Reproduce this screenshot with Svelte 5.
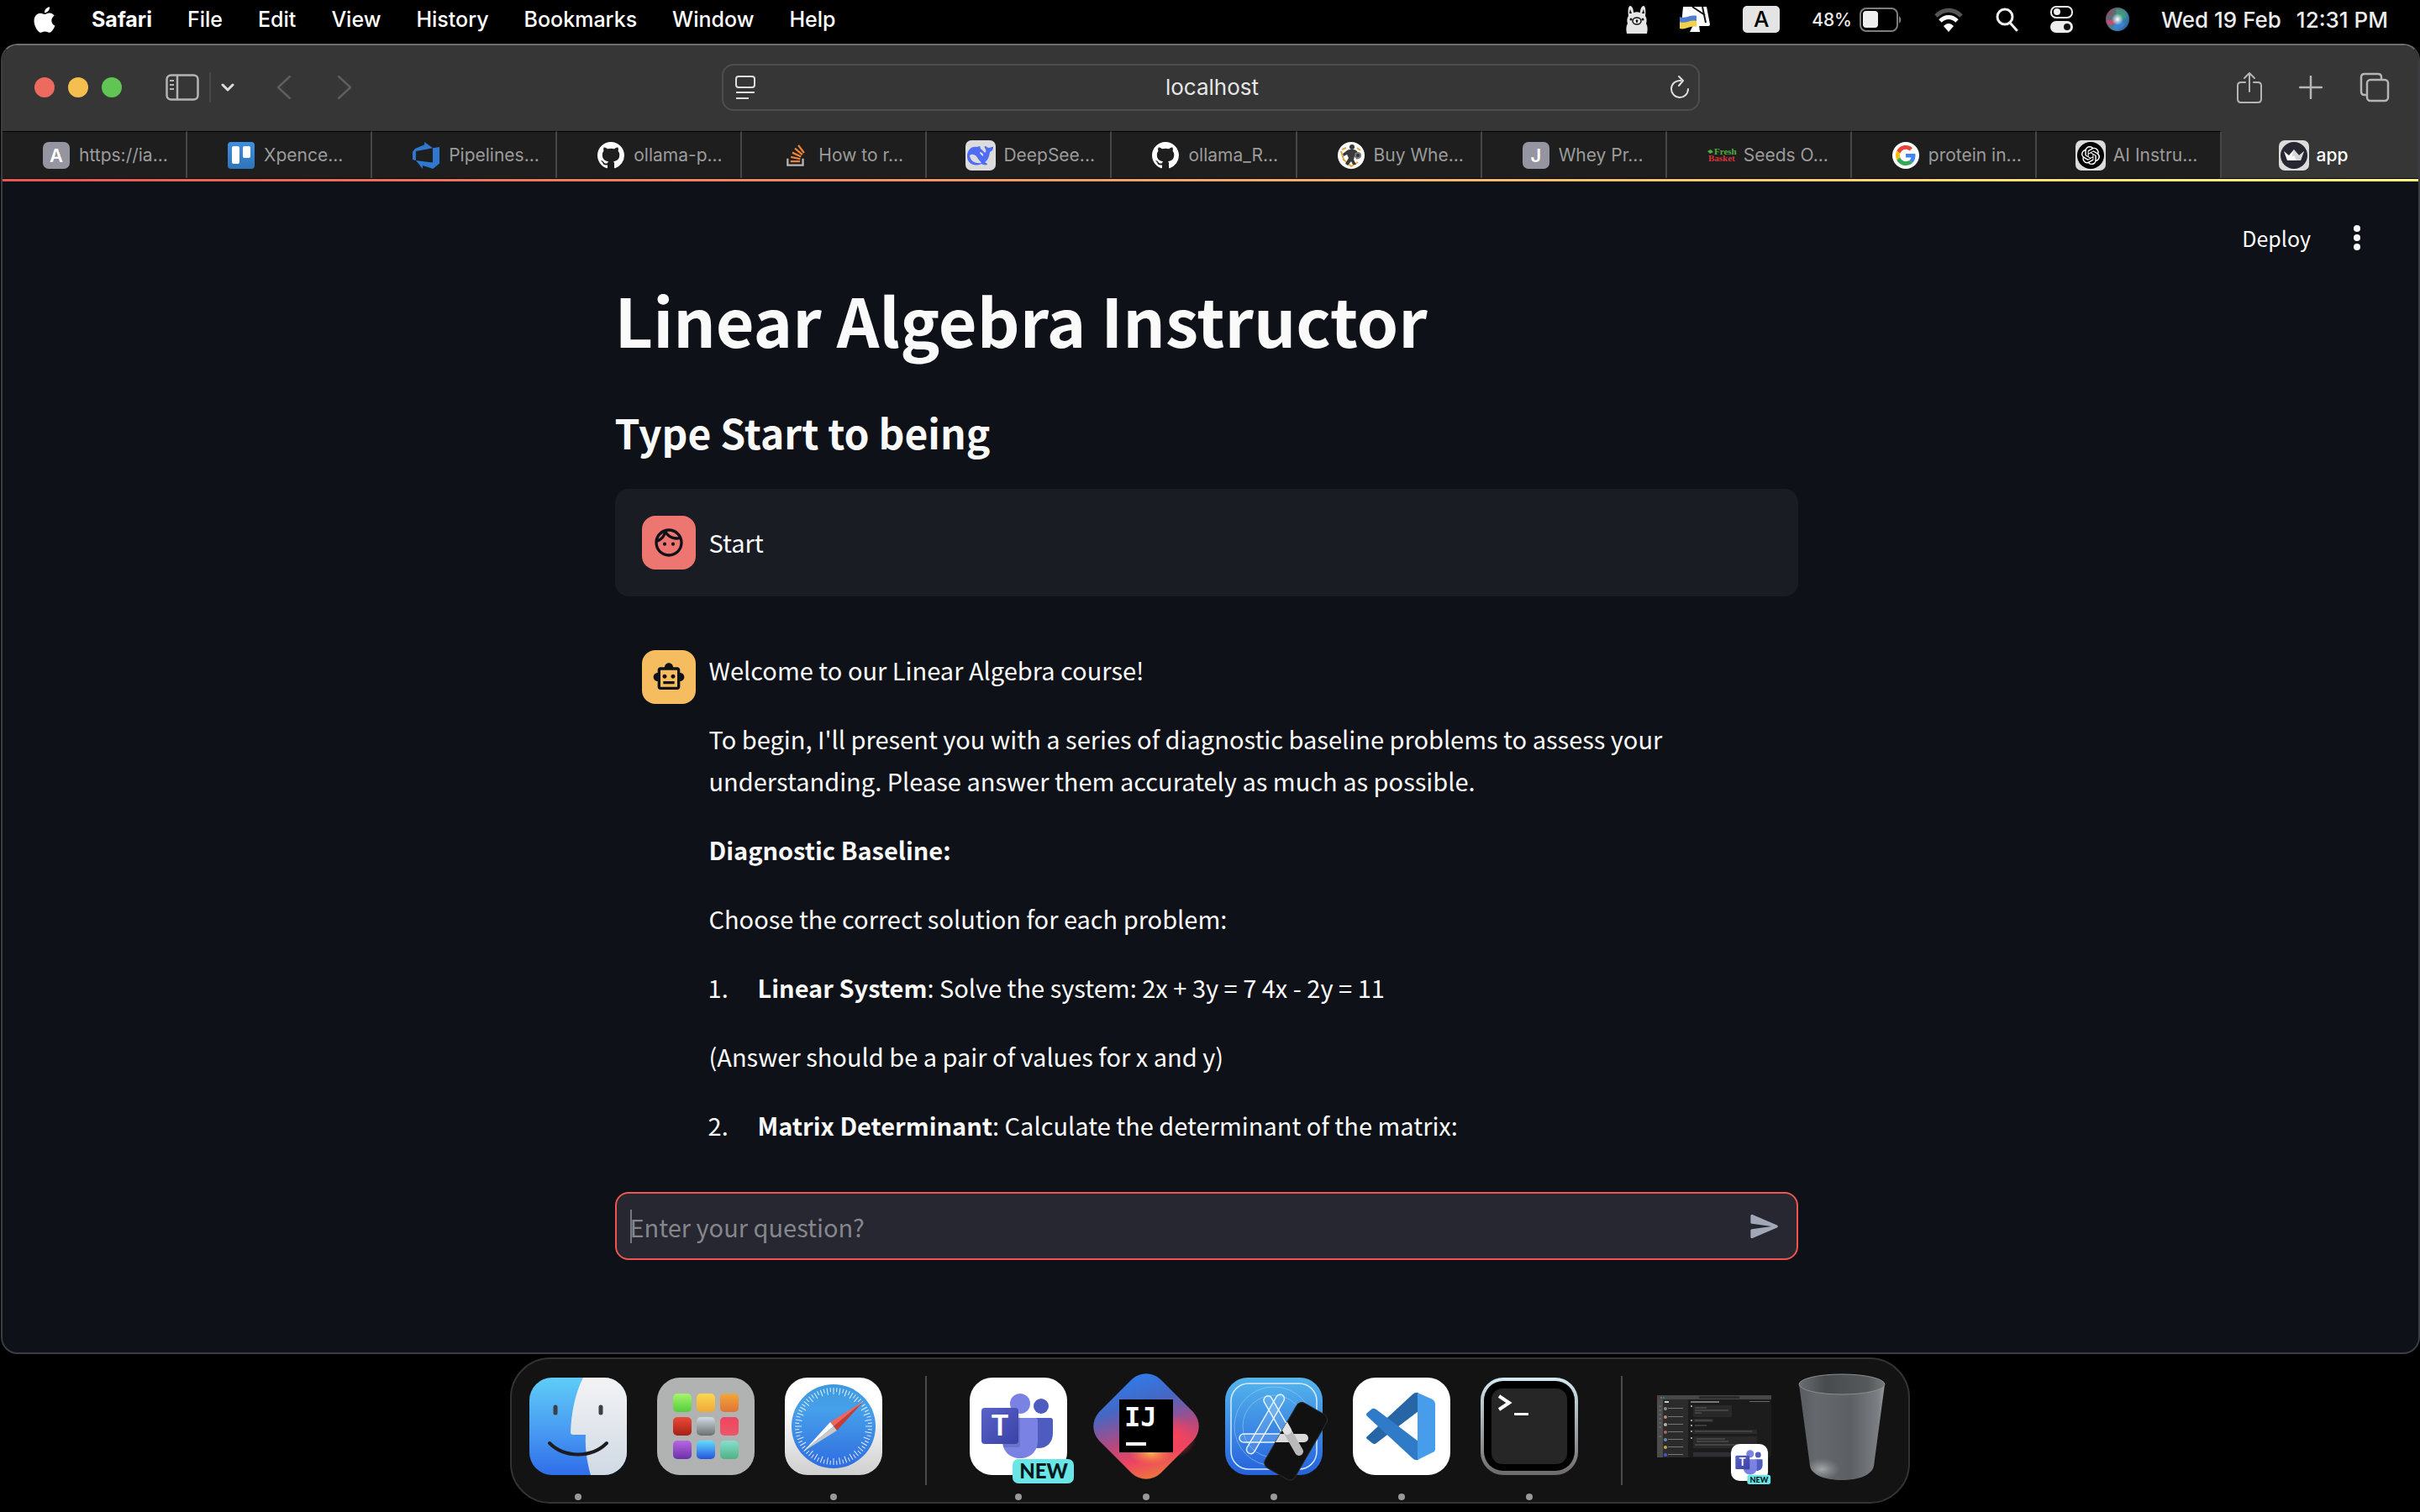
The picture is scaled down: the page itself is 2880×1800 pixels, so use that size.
<script>
  const menus = ['File', 'Edit', 'View', 'History', 'Bookmarks', 'Window', 'Help'];

  const tabs = [
    { icon: 'letter', letter: 'A', title: 'https://ia...' },
    { icon: 'trello', title: 'Xpence...' },
    { icon: 'azure', title: 'Pipelines...' },
    { icon: 'github', title: 'ollama-p...' },
    { icon: 'stack', title: 'How to r...' },
    { icon: 'deepseek', title: 'DeepSee...' },
    { icon: 'github', title: 'ollama_R...' },
    { icon: 'muscle', title: 'Buy Whe...' },
    { icon: 'letter', letter: 'J', title: 'Whey Pr...' },
    { icon: 'basket', title: 'Seeds O...' },
    { icon: 'google', title: 'protein in...' },
    { icon: 'openai', title: 'AI Instru...' },
    { icon: 'streamlit', title: 'app', active: true },
  ];

  const dock = [
    { name: 'Finder', icon: 'finder', open: true },
    { name: 'Launchpad', icon: 'launchpad' },
    { name: 'Safari', icon: 'safari', open: true },
    { separator: true },
    { name: 'Microsoft Teams', icon: 'teams', open: true },
    { name: 'IntelliJ IDEA', icon: 'intellij', open: true },
    { name: 'Simulator', icon: 'simulator', open: true },
    { name: 'Visual Studio Code', icon: 'vscode', open: true },
    { name: 'Terminal', icon: 'terminal', open: true },
    { separator: true },
    { name: 'Minimised Teams window', icon: 'thumbnail' },
    { name: 'Trash', icon: 'trash' },
  ];

  const ticks = Array.from({ length: 72 }, (_, i) => i);

  const pads = [
    ['#a5f56e', '#56cc3c'], ['#fbd74f', '#f0a93a'], ['#f2a63a', '#e07434'],
    ['#ea4a38', '#a82116'], ['#cfdde2', '#6c6f70'], ['#ec4660', '#ee5767'],
    ['#b867e4', '#6a31a8'], ['#62dcfd', '#2353dd'], ['#86dfcf', '#4fb184'],
  ];

  const chatRows = [
    { y: 31, c: '#8d8d8d' }, { y: 41, c: '#c08a7c' }, { y: 50, c: '#b9b4a8' },
    { y: 59, c: '#a66' }, { y: 68, c: '#6a86b8' }, { y: 77, c: '#c9a25a' }, { y: 86, c: '#4a55c0' },
  ];

  let question = $state('');
  let address = $state('localhost');
</script>

{#snippet favicon(tab)}
  {#if tab.icon === 'letter'}
    <svg viewBox="0 0 32 32" width="32" height="32" aria-hidden="true">
      <rect width="32" height="32" rx="7" fill="#9495a1" />
      <text x="16" y="24" text-anchor="middle" font-size="22" font-weight="600" fill="#fff">{tab.letter}</text>
    </svg>
  {:else if tab.icon === 'trello'}
    <svg viewBox="0 0 32 32" width="32" height="32" aria-hidden="true">
      <defs><linearGradient id="trello" x2="0" y2="1"><stop stop-color="#3e8fe0" /><stop offset="1" stop-color="#2f74b8" /></linearGradient></defs>
      <rect width="32" height="32" rx="4" fill="url(#trello)" />
      <rect x="5" y="5" width="9" height="21" rx="2" fill="#fff" /><rect x="18" y="5" width="9" height="14" rx="2" fill="#fff" />
    </svg>
  {:else if tab.icon === 'azure'}
    <svg viewBox="0 0 24 24" width="32" height="32" aria-hidden="true">
      <path fill="#2f78d0" d="M0 8.877L2.247 5.91l8.405-3.416V.022l7.37 5.393L2.966 8.338v8.225L0 15.707zm24-4.45v14.651l-5.753 4.9-9.303-3.057v3.056l-5.978-7.416 15.057 1.798V5.415z" />
    </svg>
  {:else if tab.icon === 'github'}
    <svg viewBox="0 0 16 16" width="32" height="32" aria-hidden="true">
      <path fill="#fff" d="M8 0C3.58 0 0 3.58 0 8c0 3.54 2.29 6.53 5.47 7.59.4.07.55-.17.55-.38 0-.19-.01-.82-.01-1.49-2.01.37-2.53-.49-2.69-.94-.09-.23-.48-.94-.82-1.13-.28-.15-.68-.52-.01-.53.63-.01 1.08.58 1.23.82.72 1.21 1.87.87 2.33.66.07-.52.28-.87.51-1.07-1.78-.2-3.64-.89-3.64-3.95 0-.87.31-1.59.82-2.15-.08-.2-.36-1.02.08-2.12 0 0 .67-.21 2.2.82.64-.18 1.32-.27 2-.27s1.36.09 2 .27c1.53-1.04 2.2-.82 2.2-.82.44 1.1.16 1.92.08 2.12.51.56.82 1.27.82 2.15 0 3.07-1.87 3.75-3.65 3.95.29.25.54.73.54 1.48 0 1.07-.01 1.93-.01 2.2 0 .21.15.46.55.38A8.01 8.01 0 0016 8c0-4.42-3.58-8-8-8z" />
    </svg>
  {:else if tab.icon === 'stack'}
    <svg viewBox="-3 -3 30 30" width="32" height="32" aria-hidden="true">
      <path fill="#ee8236" d="M15.725 0l-1.72 1.277 6.39 8.588 1.716-1.277L15.725 0zm-3.94 3.418l-1.369 1.644 8.225 6.85 1.369-1.644-8.225-6.85zm-3.15 4.465l-.905 1.94 9.702 4.517.904-1.94-9.701-4.517zm-1.85 4.86l-.44 2.093 10.473 2.201.44-2.092-10.473-2.203zm-.63 4.86v2.13h10.66v-2.13H6.154Z" />
      <path fill="#b4b8bd" d="M1.89 15.47V24h19.19v-8.53h-2.133v6.397H4.021v-6.396H1.89z" />
    </svg>
  {:else if tab.icon === 'deepseek'}
    <svg class="wide" viewBox="0 0 36 36" width="36" height="36" aria-hidden="true">
      <rect width="36" height="36" rx="7" fill="#dcdcdc" />
      <path fill="#4f6cf6" d="M2 19C2 12 7 7 13 8c2 0 2-1 4-1 1 0 0 2 1 3 2 2 4 3 5 5 1-1 2-2 1-4s-2-3-1-4c2 0 3 2 5 2s3-2 5-1c0 4-2 5-4 6-1 7-3 10-6 12 1 1 3 1 3 3-3 1-5 0-7-1C11 32 2 28 2 19z" />
      <path fill="#dcdcdc" d="M5 18c4-3 8 0 10 4 1 2 3 3 4 5-6 1-13-1-14-9zM17 14c3 0 5 3 4 5-2-1-4-3-4-5z" />
    </svg>
  {:else if tab.icon === 'muscle'}
    <svg viewBox="0 0 32 32" width="32" height="32" aria-hidden="true">
      <circle cx="16" cy="16" r="16" fill="#fff" />
      <path fill="none" stroke="#dfa63c" stroke-width="2" d="M5 9l5-2M4 11l3 10 9 8 8-5M27 10l-4-3" />
      <circle cx="17" cy="6" r="3" fill="#3a3a3a" />
      <path fill="#3a3a3a" d="M10 11c3-3 10-3 13 0l3 5-3 5-3-4-1 4 3 6h-4l-2-4-4 5-3-2 4-7-2-4-4 2-1-3z" />
      <circle cx="24" cy="16" r="4" fill="#777" /><circle cx="24" cy="16" r="2" fill="#333" />
    </svg>
  {:else if tab.icon === 'basket'}
    <svg class="spill" viewBox="0 0 32 32" width="32" height="32" aria-hidden="true">
      <text class="script" x="8" y="15" font-size="11" fill="#4caf3c">Fresh</text>
      <text class="script" x="1" y="23" font-size="11" fill="#d8323a">Basket</text>
      <path d="M0 11l4-2 3 3-4 2z" fill="#4caf3c" />
    </svg>
  {:else if tab.icon === 'google'}
    <svg viewBox="0 0 32 32" width="32" height="32" aria-hidden="true">
      <circle cx="16" cy="16" r="16" fill="#fff" />
      <g transform="translate(4 4) scale(.5)">
        <path fill="#ea4335" d="M24 9.5c3.54 0 6.71 1.22 9.21 3.6l6.85-6.85C35.9 2.38 30.47 0 24 0 14.62 0 6.51 5.38 2.56 13.22l7.98 6.19C12.43 13.72 17.74 9.5 24 9.5z" />
        <path fill="#4285f4" d="M46.98 24.55c0-1.57-.15-3.09-.38-4.55H24v9.02h12.94c-.58 2.96-2.26 5.48-4.78 7.18l7.73 6c4.51-4.18 7.09-10.36 7.09-17.65z" />
        <path fill="#fbbc05" d="M10.53 28.59c-.48-1.45-.76-2.99-.76-4.59s.27-3.14.76-4.59l-7.98-6.19C.92 16.46 0 20.12 0 24c0 3.88.92 7.54 2.56 10.78l7.97-6.19z" />
        <path fill="#34a853" d="M24 48c6.48 0 11.93-2.13 15.89-5.81l-7.73-6c-2.15 1.45-4.92 2.3-8.16 2.3-6.26 0-11.57-4.22-13.47-9.91l-7.98 6.19C6.51 42.62 14.62 48 24 48z" />
      </g>
    </svg>
  {:else if tab.icon === 'openai'}
    <svg class="wide" viewBox="0 0 36 36" width="36" height="36" aria-hidden="true">
      <rect width="36" height="36" rx="7" fill="#dcdcdc" />
      <circle cx="18" cy="18" r="16" fill="#000" />
      <g transform="translate(7 7) scale(.92)">
        <path fill="#fff" d="M22.2819 9.8211a5.9847 5.9847 0 0 0-.5157-4.9108 6.0462 6.0462 0 0 0-6.5098-2.9A6.0651 6.0651 0 0 0 4.9807 4.1818a5.9847 5.9847 0 0 0-3.9977 2.9 6.0462 6.0462 0 0 0 .7427 7.0966 5.98 5.98 0 0 0 .511 4.9107 6.051 6.051 0 0 0 6.5146 2.9001A5.9847 5.9847 0 0 0 13.2599 24a6.0557 6.0557 0 0 0 5.7718-4.2058 5.9894 5.9894 0 0 0 3.9977-2.9001 6.0557 6.0557 0 0 0-.7475-7.0729zm-9.022 12.6081a4.4755 4.4755 0 0 1-2.8764-1.0408l.1419-.0804 4.7783-2.7582a.7948.7948 0 0 0 .3927-.6813v-6.7369l2.02 1.1686a.071.071 0 0 1 .038.052v5.5826a4.504 4.504 0 0 1-4.4945 4.4944zm-9.6607-4.1254a4.4708 4.4708 0 0 1-.5346-3.0137l.142.0852 4.783 2.7582a.7712.7712 0 0 0 .7806 0l5.8428-3.3685v2.3324a.0804.0804 0 0 1-.0332.0615L9.74 19.9502a4.4992 4.4992 0 0 1-6.1408-1.6464zM2.3408 7.8956a4.485 4.485 0 0 1 2.3655-1.9728V11.6a.7664.7664 0 0 0 .3879.6765l5.8144 3.3543-2.0201 1.1685a.0757.0757 0 0 1-.071 0l-4.8303-2.7865A4.504 4.504 0 0 1 2.3408 7.872zm16.5963 3.8558L13.1038 8.364 15.1192 7.2a.0757.0757 0 0 1 .071 0l4.8303 2.7913a4.4944 4.4944 0 0 1-.6765 8.1042v-5.6772a.79.79 0 0 0-.407-.667zm2.0107-3.0231l-.142-.0852-4.7735-2.7818a.7759.7759 0 0 0-.7854 0L9.409 9.2297V6.8974a.0662.0662 0 0 1 .0284-.0615l4.8303-2.7866a4.4992 4.4992 0 0 1 6.6802 4.66zM8.3065 12.863l-2.02-1.1638a.0804.0804 0 0 1-.038-.0567V6.0742a4.4992 4.4992 0 0 1 7.3757-3.4537l-.142.0805L8.704 5.459a.7948.7948 0 0 0-.3927.6813zm1.0976-2.3654l2.602-1.4998 2.6069 1.4998v2.9994l-2.5974 1.4997-2.6067-1.4997Z" />
      </g>
    </svg>
  {:else}
    <svg class="wide" viewBox="0 0 36 36" width="36" height="36" aria-hidden="true">
      <rect width="36" height="36" rx="7" fill="#dcdcdc" />
      <circle cx="18" cy="18" r="16" fill="#262730" />
      <path fill="#fff" d="M6 13l6 5 6-7 6 7 6-5-4 11H10z" />
      <path fill="#b9bac0" d="M18 11l6 7 6-5-4 11H14z" opacity=".6" />
      <path fill="#fff" d="M10 24l8-6 3 6z" />
    </svg>
  {/if}
{/snippet}

{#snippet teams()}
  <rect width="116" height="116" rx="27" fill="#fff" />
  <circle cx="85" cy="34" r="9" fill="#4e5bbf" />
  <path d="M76 48h20q3 0 3 3v15c0 11-7 18-17 18-4 0-7-1-9-3z" fill="#4e5bbf" />
  <circle cx="60" cy="31" r="12" fill="#7a83e4" />
  <path d="M56 48h22q3 0 3 3v24c0 13-9 21-21 21S39 88 39 75V60z" fill="#7a83e4" />
  <path d="M42 44h18v36q0 3-3 3H40l-1-8z" fill="#000" opacity=".12" />
  <rect x="14" y="36" width="44" height="43" rx="4" fill="url(#teams-tile)" />
  <text class="sans" x="36" y="69" text-anchor="middle" font-size="34" font-weight="700" fill="#fff">T</text>
  <rect x="51" y="97" width="73" height="29" rx="7" fill="#6be6e6" />
  <text class="badge-text" x="88" y="120" text-anchor="middle" font-size="24" font-weight="700" fill="#06181b">NEW</text>
{/snippet}

{#snippet dockIcon(icon)}
  <svg class="dock-icon" viewBox="0 0 116 116" width="116" height="116" aria-hidden="true">
    {#if icon === 'finder'}
      <defs>
        <linearGradient id="finder-blue" x2="0" y2="1"><stop stop-color="#5fcdf8" /><stop offset=".5" stop-color="#4a9ff2" /><stop offset="1" stop-color="#2f6eea" /></linearGradient>
        <linearGradient id="finder-white" x2="0" y2="1"><stop stop-color="#f3f3f4" /><stop offset="1" stop-color="#d0d9e4" /></linearGradient>
        <clipPath id="finder-clip"><rect width="116" height="116" rx="27" /></clipPath>
      </defs>
      <g clip-path="url(#finder-clip)">
        <rect width="116" height="116" fill="url(#finder-blue)" />
        <path d="M64 0C54 20 50 42 49 65q0 3 3 3h15c-1 18 2 34 6 48h43V0z" fill="url(#finder-white)" />
      </g>
      <path d="M31 35v7M85 35v7" stroke="#3c3f44" stroke-width="5" stroke-linecap="round" />
      <path d="M24 78c18 18 50 18 68 0" fill="none" stroke="#1c1c1e" stroke-width="4" stroke-linecap="round" />
    {:else if icon === 'launchpad'}
      <rect width="116" height="116" rx="27" fill="#b1b2b2" />
      {#each pads as [from, to], i}
        <linearGradient id="pad-{i}" x2="0" y2="1"><stop stop-color={from} /><stop offset="1" stop-color={to} /></linearGradient>
        <rect x={19 + (i % 3) * 28} y={19 + Math.floor(i / 3) * 28} width="22" height="22" rx="5" fill="url(#pad-{i})" />
      {/each}
    {:else if icon === 'safari'}
      <defs>
        <linearGradient id="safari-tile" x2="0" y2="1"><stop offset=".3" stop-color="#fff" /><stop offset="1" stop-color="#cfcfcf" /></linearGradient>
        <linearGradient id="safari-dial" x2="0" y2="1"><stop stop-color="#3d9ade" /><stop offset=".3" stop-color="#46a0ea" /><stop offset="1" stop-color="#2f6ce0" /></linearGradient>
      </defs>
      <rect width="116" height="116" rx="27" fill="url(#safari-tile)" />
      <circle cx="58" cy="58" r="50" fill="url(#safari-dial)" />
      {#each ticks as i}
        <path d={i % 2 ? 'M58 12v5' : 'M58 12v8'} stroke="#fff" stroke-width="1" opacity=".85" transform="rotate({i * 5} 58 58)" />
      {/each}
      <path d="M94 28L54 53l4 5z" fill="#f0655c" /><path d="M94 28L62 63l-4-5z" fill="#c73c33" />
      <path d="M22 88l32-35 4 5z" fill="#fff" /><path d="M22 88l40-25-4-5z" fill="#c6c8ca" />
    {:else if icon === 'teams'}
      {@render teams()}
    {:else if icon === 'intellij'}
      <defs>
        <linearGradient id="ij-base" x1=".3" x2=".6" y2="1"><stop stop-color="#2f7df0" /><stop offset=".3" stop-color="#4468c4" /><stop offset=".6" stop-color="#b5487f" /><stop offset=".8" stop-color="#ee4560" /><stop offset="1" stop-color="#ee7a3c" /></linearGradient>
        <radialGradient id="ij-pink"><stop stop-color="#fa4357" /><stop offset="1" stop-color="#fa4357" stop-opacity="0" /></radialGradient>
        <radialGradient id="ij-gold"><stop stop-color="#f8b546" /><stop offset="1" stop-color="#f8803c" stop-opacity="0" /></radialGradient>
      </defs>
      <path d="M41 2c10-9 24-9 34 0l39 39c9 10 9 24 0 34l-39 39c-10 9-24 9-34 0L2 75c-9-10-9-24 0-34z" fill="url(#ij-base)" />
      <circle cx="92" cy="70" r="26" fill="url(#ij-pink)" />
      <ellipse cx="64" cy="90" rx="26" ry="14" fill="url(#ij-gold)" />
      <rect x="26" y="26" width="64" height="63" fill="#000" />
      <text class="mono" x="32" y="58" font-size="32" font-weight="700" fill="#fff">IJ</text>
      <rect x="34" y="77" width="24" height="4" fill="#fff" />
    {:else if icon === 'simulator'}
      <defs>
        <linearGradient id="sim-tile" x2="0" y2="1"><stop stop-color="#54b5ec" /><stop offset="1" stop-color="#2661dc" /></linearGradient>
        <clipPath id="sim-phone"><rect x="64" y="31" width="41" height="89" rx="7" transform="rotate(30 84 75)" /></clipPath>
      </defs>
      <rect width="116" height="116" rx="27" fill="url(#sim-tile)" />
      <rect x="7" y="7" width="102" height="102" rx="21" fill="none" stroke="#d4ecfb" stroke-width="1.5" />
      <g fill="none" stroke="#9fd2f5" opacity=".55"><circle cx="58" cy="58" r="47" /><circle cx="58" cy="58" r="37" /></g>
      <g fill="#ffffff" fill-opacity=".12" stroke="#e4f3fd" stroke-width="1.5">
        <rect x="53" y="20" width="10" height="80" rx="5" transform="rotate(-30 58 39)" />
        <rect x="53" y="18" width="10" height="80" rx="5" transform="rotate(30 58 38)" />
        <rect x="17" y="67" width="82" height="10" rx="5" />
      </g>
      <rect x="64" y="31" width="41" height="89" rx="7" transform="rotate(30 84 75)" fill="#111" stroke="#2c2c2c" />
      <g clip-path="url(#sim-phone)" stroke-linecap="round" stroke-width="10">
        <path d="M30 72h64" stroke="#dadada" />
        <path d="M52 25l36 63" stroke="#b9b9b9" />
        <path d="M66 49l8 14" stroke="#e2e2e2" />
      </g>
    {:else if icon === 'vscode'}
      <rect width="116" height="116" rx="27" fill="#fff" />
      <path d="M17 70L71 20q3-3 7-2v22L28 78q-2 2-5 0l-6-5q-2-1 0-3z" fill="#2766a6" />
      <path d="M17 46q-2-2 0-4l6-5q2-1 5 1l50 38v22q-4 1-7-2z" fill="#307bc8" />
      <path d="M77 18l18 8q3 2 3 5v54q0 3-3 4l-18 9z" fill="#479deb" />
    {:else if icon === 'terminal'}
      <defs><linearGradient id="term-rim" x2="0" y2="1"><stop stop-color="#d3e8f1" /><stop offset="1" stop-color="#6e6a6a" /></linearGradient></defs>
      <rect width="116" height="116" rx="27" fill="url(#term-rim)" />
      <rect x="4" y="4" width="108" height="107" rx="23" fill="#000" />
      <rect x="13" y="13" width="90" height="90" rx="13" fill="#262626" />
      <path d="M22 22l12 8-12 8" fill="none" stroke="#fff" stroke-width="4" />
      <rect x="40" y="42" width="17" height="3" fill="#fff" />
    {:else if icon === 'thumbnail'}
      <g transform="translate(-10 21)">
        <rect width="136" height="74" rx="2" fill="#1c1c1c" />
        <rect width="136" height="5" fill="#474747" /><rect x="50" y="1" width="48" height="3" fill="#2b2b2b" />
        <circle cx="2" cy="3" r="1" fill="#d05" /><circle cx="5" cy="3" r="1" fill="#4a4" /><circle cx="8" cy="3" r="1" fill="#46f" />
        <rect y="5" width="7" height="69" fill="#4c4c4c" /><rect x="7" y="5" width="30" height="69" fill="#2b2b2b" />
        <path d="M2 13h3M2 18h3M2 23h3M2 28h3M2 33h3M2 38h3M2 49h3" stroke="#77777f" />
        <rect x="9" y="7" width="5" height="2" fill="#ccc" />
        <rect x="40" y="7" width="34" height="2" fill="#777" /><rect x="110" y="7" width="24" height="1" fill="#666" />
        {#each chatRows as row}
          <circle cx="10" cy={row.y - 15} r="2" fill={row.c} />
          <rect x="13" y={row.y - 16} width="18" height="1" fill="#777" />
        {/each}
        <rect x="43" y="12" width="46" height="14" fill="#292929" /><path d="M45 15h14M45 18h40M45 21h8" stroke="#5e5e5e" />
        <rect x="43" y="28" width="24" height="4" fill="#2c2c2c" /><rect x="43" y="41" width="76" height="5" fill="#2a2a2a" /><path d="M45 43h68M45 36h14M45 30h20" stroke="#5a5a5a" />
        <rect x="43" y="49" width="76" height="14" fill="#292929" /><path d="M47 52h34M47 55h38M45 59h50" stroke="#5e5e5e" />
        <rect x="43" y="68" width="50" height="3" fill="#2f2f2f" /><path d="M43 72h50" stroke="#3d3d62" />
        <g fill="#c9c9b9"><circle cx="41" cy="13" r="1" /><circle cx="41" cy="30" r="1" /><circle cx="41" cy="36" r="1" /><circle cx="41" cy="43" r="1" /><circle cx="41" cy="51" r="1" /></g>
      </g>
      <g transform="translate(78 79) scale(.38)">{@render teams()}</g>
    {:else if icon === 'trash'}
      <defs>
        <linearGradient id="bin" x2="1" y2="0"><stop stop-color="#595d61" /><stop offset=".2" stop-color="#65696d" /><stop offset=".6" stop-color="#5c6064" /><stop offset=".92" stop-color="#7b7f83" /><stop offset="1" stop-color="#95999c" /></linearGradient>
        <linearGradient id="bin-in" x2="1" y2="0"><stop stop-color="#6a6e70" /><stop offset=".3" stop-color="#474b4e" /><stop offset=".8" stop-color="#55595c" /><stop offset="1" stop-color="#777" /></linearGradient>
        <radialGradient id="bin-glow"><stop stop-color="#a5a8aa" /><stop offset="1" stop-color="#8a8d90" stop-opacity="0" /></radialGradient>
        <clipPath id="bin-clip"><path d="M7 8l13 97c2 11 18 17 38 17s36-6 38-17L109 8z" /></clipPath>
      </defs>
      <path d="M7 8l13 97c2 11 18 17 38 17s36-6 38-17L109 8z" fill="url(#bin)" />
      <ellipse cx="34" cy="109" rx="22" ry="13" fill="url(#bin-glow)" clip-path="url(#bin-clip)" />
      <ellipse cx="58" cy="8" rx="51" ry="12" fill="url(#bin-in)" stroke="#8b8f92" />
    {/if}
  </svg>
{/snippet}

<svg class="defs" width="0" height="0" aria-hidden="true">
  <defs><linearGradient id="teams-tile" x2="1" y2="1"><stop stop-color="#5b63c8" /><stop offset="1" stop-color="#3a41a6" /></linearGradient></defs>
</svg>

<div class="desktop">
  <header class="menubar">
    <nav class="menus" aria-label="Menu bar">
      <button class="apple" aria-label="Apple menu">
        <svg viewBox="1 0 22 24" width="28" height="31" aria-hidden="true"><path fill="#fff" d="M12.152 6.896c-.948 0-2.415-1.078-3.96-1.04-2.04.027-3.91 1.183-4.961 3.014-2.117 3.675-.546 9.103 1.519 12.09 1.013 1.454 2.208 3.09 3.792 3.039 1.52-.065 2.09-.987 3.935-.987 1.831 0 2.35.987 3.96.948 1.637-.026 2.676-1.48 3.676-2.948 1.156-1.688 1.636-3.325 1.662-3.415-.039-.013-3.182-1.221-3.22-4.857-.026-3.04 2.48-4.494 2.597-4.559-1.429-2.09-3.623-2.324-4.39-2.376-2-.156-3.675 1.09-4.61 1.09zM15.53 3.83c.843-1.012 1.4-2.427 1.245-3.83-1.207.052-2.662.805-3.532 1.818-.78.896-1.454 2.338-1.273 3.714 1.338.104 2.715-.688 3.559-1.701" /></svg>
      </button>
      <button class="app-name">Safari</button>
      {#each menus as menu}
        <button>{menu}</button>
      {/each}
    </nav>
    <div class="status">
      <button aria-label="Ollama">
        <svg viewBox="0 0 26 34" width="26" height="34" aria-hidden="true">
          <path fill="#e6e6e6" d="M3 13C2 6 3 1 5 1s4 3 4 8c3-1 5-1 8 0 0-5 2-8 4-8s3 5 2 12c2 3 2 6 1 9 2 3 2 8 1 12H1c-1-4-1-9 1-12-1-3-1-6 1-9z" />
          <path fill="#111" d="M5 5l2 5H4zM21 5l-2 5h3z" />
          <circle cx="6" cy="17" r="1.5" fill="#111" /><circle cx="20" cy="17" r="1.5" fill="#111" />
          <ellipse cx="13" cy="19" rx="5" ry="4" fill="none" stroke="#111" stroke-width="1.5" /><path d="M12 18h2l-1 3z" stroke="#111" />
        </svg>
      </button>
      <button aria-label="Display">
        <svg viewBox="0 0 37 32" width="37" height="32" aria-hidden="true">
          <path fill="#fff" d="M4 1h28l4 21q0 2-2 2H4q-2 0-2-2zM16 23h7l1 8H12z" /><path d="M15 1l15 10M27 1l4 19" stroke="#111" stroke-width="2" fill="none" />
          <path fill="#4f7dd0" d="M0 13c7 3 12-3 20-1v7c-8-2-13 4-20 1z" /><path fill="#f2d04c" d="M0 19c7 3 12-3 20-1v7c-8-2-13 4-20 2z" />
        </svg>
      </button>
      <button class="keyboard" aria-label="Input source">A</button>
      <button class="battery">
        <span>48%</span>
        <svg viewBox="0 0 50 29" width="50" height="29" aria-hidden="true"><rect x="1" y="1" width="44" height="27" rx="7" fill="none" stroke="#7d7d7d" stroke-width="2" /><rect x="4" y="4" width="18" height="20" rx="4" fill="#eee" /><path d="M47 10c3 2 3 7 0 9z" fill="#7d7d7d" /></svg>
      </button>
      <button aria-label="Wi-Fi">
        <svg viewBox="0 0 36 30" width="36" height="30" aria-hidden="true"><g fill="none" stroke-width="5"><path d="M3 11c9-9 21-9 30 0" stroke="#555" /><path d="M8 17c6-6 14-6 20 0" stroke="#fff" /></g><path fill="#fff" d="M12 23c4-4 8-4 12 0l-6 7z" /></svg>
      </button>
      <button aria-label="Spotlight">
        <svg viewBox="0 0 27 32" width="27" height="32" aria-hidden="true"><g fill="none" stroke="#eee" stroke-width="3" stroke-linecap="round"><circle cx="11" cy="13" r="9" /><path d="M17 20l8 9" /></g></svg>
      </button>
      <button aria-label="Control Centre">
        <svg viewBox="0 0 28 34" width="28" height="34" aria-hidden="true"><rect x="1" y="2" width="25" height="13" rx="6" fill="none" stroke="#eee" stroke-width="2" /><circle cx="8" cy="8" r="4" fill="#eee" /><rect y="19" width="27" height="14" rx="7" fill="#eee" /><circle cx="20" cy="26" r="4" fill="#111" /></svg>
      </button>
      <button aria-label="Siri">
        <svg viewBox="0 0 28 28" width="28" height="28" aria-hidden="true">
          <defs>
            <linearGradient id="siri" x2="1" y2=".7"><stop stop-color="#a33a5e" /><stop offset=".4" stop-color="#5a6f7a" /><stop offset=".7" stop-color="#3b8aa0" /><stop offset="1" stop-color="#2f63a8" /></linearGradient>
            <radialGradient id="siri-core"><stop stop-color="#fff" /><stop offset="1" stop-color="#fff" stop-opacity="0" /></radialGradient>
          </defs>
          <circle cx="14" cy="14" r="14" fill="url(#siri)" /><path d="M1 15c0 6 6 9 12 1z" fill="#e0436e" opacity=".8" /><path d="M12 2c7-1 12 5 12 10l-11 1z" fill="#3fa07a" opacity=".8" /><path d="M8 24c4 3 12 2 15-5l-9-4z" fill="#3f7fe0" opacity=".8" /><circle cx="14" cy="14" r="7" fill="url(#siri-core)" />
        </svg>
      </button>
      <button class="clock"><span>Wed 19 Feb</span><span>12:31 PM</span></button>
    </div>
  </header>

  <section class="window" aria-label="Safari">
    <div class="toolbar">
      <div class="tools">
        <div class="lights">
          <button class="light close" aria-label="Close"></button>
          <button class="light minimise" aria-label="Minimise"></button>
          <button class="light zoom" aria-label="Zoom"></button>
        </div>
        <button aria-label="Sidebar">
          <svg viewBox="0 0 40 32" width="40" height="32" aria-hidden="true"><g fill="none" stroke="#b5b5b5" stroke-width="2.5"><rect x="1.5" y="1.5" width="37" height="29" rx="5" /><path d="M14 2v28" /><path d="M5 8h5M5 13h5M5 18h5" stroke-width="2" /></g></svg>
        </button>
        <span class="rule"></span>
        <button class="chevron" aria-label="Tab groups">
          <svg viewBox="0 0 16 10" width="16" height="10" aria-hidden="true"><path d="M2 2l6 6 6-6" fill="none" stroke="#dcdcdc" stroke-width="3" stroke-linecap="round" stroke-linejoin="round" /></svg>
        </button>
        <div class="history">
          <button aria-label="Back"><svg viewBox="0 0 18 30" width="18" height="30" aria-hidden="true"><path d="M16 2L2 15l14 13" fill="none" stroke="#5e5e5e" stroke-width="2.5" stroke-linecap="round" stroke-linejoin="round" /></svg></button>
          <button aria-label="Forward"><svg viewBox="0 0 18 30" width="18" height="30" aria-hidden="true"><path d="M2 2l14 13L2 28" fill="none" stroke="#5e5e5e" stroke-width="2.5" stroke-linecap="round" stroke-linejoin="round" /></svg></button>
        </div>
      </div>
      <div class="address">
        <button aria-label="Page settings">
          <svg viewBox="0 0 24 28" width="24" height="28" aria-hidden="true"><g fill="none" stroke="#dedede" stroke-width="2"><rect x="1" y="1" width="22" height="13" rx="3" /><path d="M1 20h22M1 27h15" /></g></svg>
        </button>
        <input aria-label="Address" bind:value={address} />
        <button aria-label="Reload">
          <svg viewBox="0 0 24 28" width="24" height="28" aria-hidden="true"><path d="M13 6a10 10 0 1 0 9 10M11 1l5 5-5 6" fill="none" stroke="#dedede" stroke-width="2" stroke-linecap="round" stroke-linejoin="round" /></svg>
        </button>
      </div>
      <div class="actions">
        <button aria-label="Share">
          <svg viewBox="0 0 30 38" width="30" height="38" aria-hidden="true"><path d="M10 13H5q-4 0-4 4v16q0 4 4 4h20q4 0 4-4V17q0-4-4-4h-5M15 24V2M9 8l6-6 6 6" fill="none" stroke="#b5b5b5" stroke-width="2" stroke-linecap="round" stroke-linejoin="round" /></svg>
        </button>
        <button aria-label="New tab">
          <svg viewBox="0 0 28 28" width="28" height="28" aria-hidden="true"><path d="M14 1v26M1 14h26" stroke="#b5b5b5" stroke-width="2.5" stroke-linecap="round" /></svg>
        </button>
        <button aria-label="Tab overview">
          <svg viewBox="0 0 36 36" width="36" height="36" aria-hidden="true"><g fill="none" stroke="#b5b5b5" stroke-width="2.5"><path d="M9 27H6q-4 0-4-4V6q0-4 4-4h16q4 0 4 4v3" /><rect x="9" y="9" width="25" height="25" rx="4" /></g></svg>
        </button>
      </div>
    </div>

    <nav class="tabs" aria-label="Tabs">
      {#each tabs as tab}
        <a class="tab" class:active={tab.active} href="#app">
          {@render favicon(tab)}
          <span>{tab.title}</span>
        </a>
      {/each}
    </nav>

    <main class="page">
      <div class="app-bar">
        <button class="deploy">Deploy</button>
        <button aria-label="Main menu">
          <svg viewBox="0 0 8 32" width="8" height="32" aria-hidden="true"><g fill="#fafafa"><circle cx="4" cy="5" r="4" /><circle cx="4" cy="16" r="4" /><circle cx="4" cy="27" r="4" /></g></svg>
        </button>
      </div>

      <div class="scroller">
        <div class="column">
          <h1>Linear Algebra Instructor</h1>
          <h2>Type Start to being</h2>

          <article class="message user">
            <span class="avatar">
              <svg viewBox="0 0 24 24" width="40" height="40" aria-hidden="true"><path fill="#0e1117" d="M10.25 13a1.25 1.25 0 11-2.5 0 1.25 1.25 0 012.5 0zM15 11.75a1.25 1.25 0 100 2.5 1.25 1.25 0 000-2.5zm7 .25c0 5.52-4.48 10-10 10S2 17.52 2 12 6.48 2 12 2s10 4.48 10 10zM10.66 4.12C12.06 6.44 14.6 8 17.5 8c.46 0 .91-.05 1.34-.12C17.44 5.56 14.9 4 12 4c-.46 0-.91.05-1.34.12zM4.42 9.47a8.046 8.046 0 003.66-4.44 8.046 8.046 0 00-3.66 4.44zM20 12c0-.78-.12-1.53-.33-2.24-.7.15-1.42.24-2.17.24a10 10 0 01-7.76-3.69A10.016 10.016 0 014 11.86c.01.04 0 .09 0 .14 0 4.41 3.59 8 8 8s8-3.59 8-8z" /></svg>
            </span>
            <div class="body"><p>Start</p></div>
          </article>

          <article class="message assistant">
            <span class="avatar">
              <svg viewBox="0 0 24 24" width="40" height="40" aria-hidden="true"><path fill="#0e1117" d="M20 9V7c0-1.1-.9-2-2-2h-3c0-1.66-1.34-3-3-3S9 3.34 9 5H6c-1.1 0-2 .9-2 2v2c-1.66 0-3 1.34-3 3s1.34 3 3 3v4c0 1.1.9 2 2 2h12c1.1 0 2-.9 2-2v-4c1.66 0 3-1.34 3-3s-1.34-3-3-3zm-2 10H6V7h12v12zm-9-6c-.83 0-1.5-.67-1.5-1.5S8.17 10 9 10s1.5.67 1.5 1.5S9.83 13 9 13zm7.5-1.5c0 .83-.67 1.5-1.5 1.5s-1.5-.67-1.5-1.5.67-1.5 1.5-1.5 1.5.67 1.5 1.5zM8 15h8v2H8v-2z" /></svg>
            </span>
            <div class="body">
              <p>Welcome to our Linear Algebra course!</p>
              <p>To begin, I'll present you with a series of diagnostic baseline problems to assess your understanding. Please answer them accurately as much as possible.</p>
              <p><strong>Diagnostic Baseline:</strong></p>
              <p>Choose the correct solution for each problem:</p>
              <ol><li><strong>Linear System</strong>: Solve the system: 2x + 3y = 7 4x - 2y = 11</li></ol>
              <p>(Answer should be a pair of values for x and y)</p>
              <ol start="2"><li><strong>Matrix Determinant</strong>: Calculate the determinant of the matrix:</li></ol>
            </div>
          </article>
        </div>
      </div>

      <div class="composer">
        <form class="ask" onsubmit={(e) => e.preventDefault()}>
          <span class="caret"></span>
          <input placeholder="Enter your question?" aria-label="Enter your question?" bind:value={question} />
          <button aria-label="Send">
            <svg viewBox="0 0 24 24" width="40" height="40" aria-hidden="true"><path fill="#a3a8b8" d="M3.4 20.4l17.45-7.48a1 1 0 000-1.84L3.4 3.6a.993.993 0 00-1.39.91L2 9.12c0 .5.37.93.87.99L17 12 2.87 13.88c-.5.07-.87.5-.87 1l.01 4.61c0 .71.73 1.2 1.39.91z" /></svg>
          </button>
        </form>
      </div>
    </main>
  </section>

  <nav class="dock" aria-label="Dock">
    {#each dock as item}
      {#if item.separator}
        <span class="divider"></span>
      {:else}
        <button class="dock-item" class:open={item.open} aria-label={item.name}>
          {@render dockIcon(item.icon)}
          <span class="running"></span>
        </button>
      {/if}
    {/each}
  </nav>
</div>

<style>
  :global(body) {
    margin: 0;
    background: #000;
  }

  * {
    box-sizing: border-box;
  }

  button,
  input {
    padding: 0;
    border: 0;
    background: none;
    color: inherit;
    font: inherit;
  }

  svg {
    display: block;
    flex: none;
  }

  .defs {
    position: absolute;
  }

  .desktop {
    display: flex;
    flex-direction: column;
    height: 100vh;
    padding-bottom: 10px;
    background: #000;
    color: #fff;
    font-family: Inter, 'Liberation Sans', sans-serif;
    font-size: 26px;
  }

  .menubar {
    display: flex;
    justify-content: space-between;
    flex: none;
    height: 52px;
    padding: 0 38px 6px 39px;
    font-weight: 500;
  }

  .menus,
  .status {
    display: flex;
    align-items: center;
  }

  .menus {
    gap: 42px;
    font-size: 25px;
  }

  .app-name {
    font-weight: 700;
  }

  .status {
    gap: 38px;
    color: #ececec;
  }

  .keyboard {
    width: 44px;
    height: 32px;
    border-radius: 5px;
    background: #e4e4e4;
    color: #000;
    line-height: 32px;
  }

  .battery {
    display: flex;
    align-items: center;
    gap: 9px;
    font-size: 21px;
  }

  .clock {
    display: flex;
    gap: 18px;
  }

  .window {
    display: flex;
    flex-direction: column;
    flex: 1;
    min-height: 0;
    margin: 0 0 4px 1px;
    border: 2px solid #3a3d42;
    border-top-color: #6e6e6e;
    border-radius: 20px;
    overflow: hidden;
    background: #0e1117;
  }

  .toolbar {
    display: grid;
    grid-template-columns: minmax(0, 1fr) minmax(0, 1164px) minmax(0, 1fr);
    align-items: center;
    flex: none;
    height: 102px;
    padding-bottom: 3px;
    background: #363636;
  }

  .tools {
    display: flex;
    align-items: center;
    padding-left: 38px;
  }

  .lights {
    display: flex;
    gap: 16px;
    margin-right: 52px;
  }

  .light {
    width: 24px;
    height: 24px;
    border-radius: 50%;
  }

  .close {
    background: #ec6a5e;
  }

  .minimise {
    background: #f4bf4f;
  }

  .zoom {
    background: #61c554;
  }

  .rule {
    width: 2px;
    height: 36px;
    margin: 0 12px;
    background: #484848;
  }

  .history {
    display: flex;
    gap: 54px;
    margin-left: 50px;
  }

  .address {
    display: flex;
    align-items: center;
    height: 56px;
    padding: 0 10px 0 14px;
    border: 2px solid #4d4d4d;
    border-radius: 14px;
  }

  .address input {
    flex: 1;
    min-width: 0;
    color: #e6e6e6;
    text-align: center;
    outline: none;
  }

  .actions {
    display: flex;
    align-items: center;
    justify-content: flex-end;
    gap: 44px;
    padding-right: 34px;
  }

  .tabs {
    display: flex;
    flex: none;
    height: 57px;
    border-bottom: 1px solid #000;
    background: #1e1e1e;
    font-size: 21px;
  }

  .tab {
    display: flex;
    align-items: center;
    flex: 1 1 220px;
    gap: 11px;
    min-width: 0;
    padding-left: 48px;
    border-top: 1px solid #000;
    border-right: 2px solid #464646;
    color: #9b9b9b;
    text-decoration: none;
    white-space: nowrap;
  }

  .tab .wide {
    margin: 0 -2px;
  }

  .tab .spill {
    overflow: visible;
  }

  .tab.active {
    flex: 1 1 234px;
    justify-content: center;
    padding: 0 14px 0 0;
    border-top-color: #363636;
    border-right: 0;
    background: #363636;
    color: #fff;
    font-weight: 500;
  }

  .script {
    font-family: 'Liberation Serif', serif;
    font-weight: 700;
  }

  .sans {
    font-family: Lato, 'Open Sans', sans-serif;
  }

  .badge-text {
    font-family: Lato, 'Open Sans', sans-serif;
    font-weight: 900;
  }

  .mono {
    font-family: 'DejaVu Sans Mono', monospace;
  }

  .page {
    display: flex;
    flex-direction: column;
    flex: 1;
    min-height: 0;
    border-top: 3px solid;
    border-image: linear-gradient(90deg, #ea5550, #f6bf6c 65%, #fffd80) 1;
    color: #fafafa;
    font-family: 'Noto Sans CJK SC', 'Open Sans', sans-serif;
    font-size: 29px;
    line-height: 50px;
  }

  .app-bar {
    display: flex;
    align-items: center;
    justify-content: flex-end;
    flex: none;
    gap: 51px;
    padding: 42px 69px 12px;
  }

  .deploy {
    font-size: 25px;
  }

  .scroller {
    flex: 1;
    min-height: 0;
    padding-right: 10px;
    overflow: hidden;
  }

  .column {
    max-width: 1408px;
    margin: 0 auto;
  }

  h1,
  h2,
  p,
  ol {
    margin: 0;
  }

  h1 {
    font-size: 79px;
    font-weight: 700;
    line-height: 120px;
  }

  h2 {
    margin: 44px 0 38px;
    font-size: 48px;
    font-weight: 600;
    line-height: 60px;
  }

  .message {
    display: flex;
    gap: 16px;
    margin-bottom: 32px;
    padding: 32px;
    border-radius: 16px;
  }

  .user {
    align-items: center;
    background: #1a1c24;
  }

  .avatar {
    display: grid;
    place-items: center;
    flex: none;
    width: 64px;
    height: 64px;
    border-radius: 16px;
  }

  .user .avatar {
    background: #ee7671;
  }

  .assistant .avatar {
    background: #f5bd5f;
  }

  .body {
    display: flex;
    flex-direction: column;
    gap: 32px;
    flex: 1;
    min-width: 0;
    margin-top: -2px;
    padding-right: 100px;
  }

  ol {
    padding-left: 58px;
  }

  li::marker {
    content: counter(list-item) '.\2003\2009';
  }

  strong {
    font-weight: 700;
  }

  .composer {
    flex: none;
    padding: 0 10px 110px 0;
  }

  .ask {
    display: flex;
    align-items: center;
    max-width: 1408px;
    height: 81px;
    margin: 0 auto;
    padding: 0 18px 0 16px;
    border: 2px solid #f0564f;
    border-radius: 16px;
    background: #262730;
  }

  .ask input {
    flex: 1;
    min-width: 0;
    outline: none;
  }

  .ask input::placeholder {
    color: #85868c;
    opacity: 1;
  }

  .caret {
    width: 2px;
    height: 40px;
    margin-right: -2px;
    background: #77787e;
  }

  .dock {
    display: flex;
    flex: none;
    gap: 36px;
    align-self: center;
    padding: 22px 21px 2px;
    border: 2px solid #333;
    border-radius: 48px;
    background: #131313;
  }

  .dock-item {
    display: flex;
    flex-direction: column;
    align-items: center;
    gap: 22px;
  }

  .dock-icon {
    overflow: visible;
  }

  .running {
    width: 8px;
    height: 8px;
    border-radius: 50%;
  }

  .open .running {
    background: #999;
  }

  .divider {
    width: 2px;
    height: 130px;
    margin: -2px 15px 0;
    background: #4a4a4a;
  }
</style>
